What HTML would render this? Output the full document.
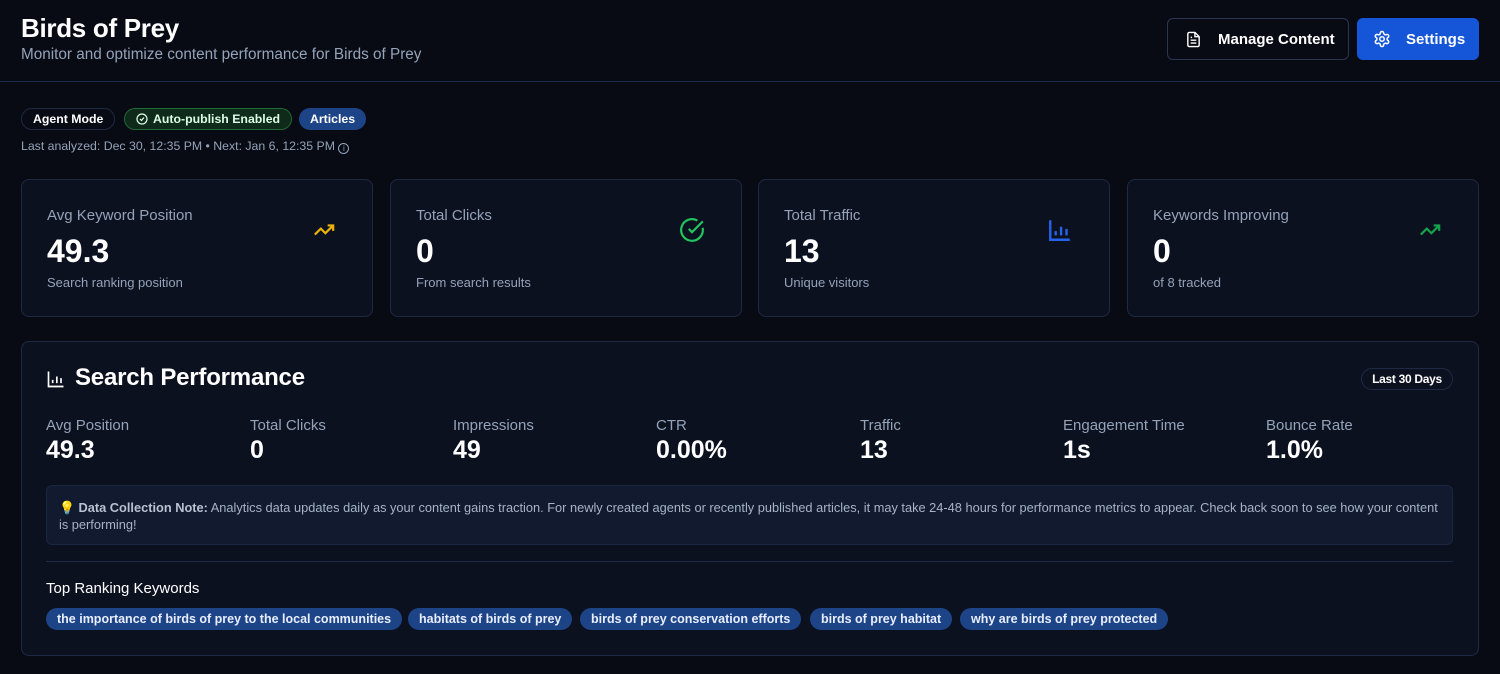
<!DOCTYPE html>
<html><head><meta charset="utf-8"><style>
*{box-sizing:border-box;margin:0;padding:0}
body{width:1500px;height:674px;background:#080b14;font-family:"Liberation Sans",sans-serif;color:#fff;position:relative;overflow:hidden}
.abs{position:absolute}
h1{position:absolute;left:21px;top:13px;font-size:26px;font-weight:700;letter-spacing:-0.3px}
.sub{left:21px;top:46px;font-size:15.3px;color:#94a3b8}
.hr{left:0;top:81px;width:1500px;height:1px;background:#1e2a4a}
.btn{top:18px;height:42px;border-radius:6px;display:flex;align-items:center;font-size:15px;font-weight:700}
.badge{top:108px;height:22px;border-radius:11px;font-size:12.3px;font-weight:700;display:flex;align-items:center;padding:0 11px}
.card{top:179px;width:352px;height:138px;background:#0c1120;border:1px solid #1e2a44;border-radius:8px}
.card .l{position:absolute;left:25px;top:27px;font-size:15px;color:#94a3b8}
.card .v{position:absolute;left:25px;top:53px;font-size:32px;font-weight:700}
.card .s{position:absolute;left:25px;top:95px;font-size:13px;color:#94a3b8}
.card svg{position:absolute;left:288px;top:38px}
.panel{left:21px;top:341px;width:1458px;height:315px;background:#0c1120;border:1px solid #1e2a44;border-radius:8px}
.m{top:417px;font-size:15px;color:#94a3b8}
.m b{display:block;color:#fff;font-size:25px;font-weight:700;margin-top:2px}
.chip{top:608px;height:22px;border-radius:11px;background:#1e4488;font-size:12.5px;font-weight:700;display:flex;align-items:center;padding:0 11px;color:#e8eefc}
</style></head><body>
<h1>Birds of Prey</h1>
<div class="abs sub">Monitor and optimize content performance for Birds of Prey</div>
<div class="abs btn" style="left:1167px;width:182px;border:1px solid #2a3550;background:#080b14">
<svg style="margin-left:17px" width="17" height="17" viewBox="0 0 24 24" fill="none" stroke="#fff" stroke-width="2"><path d="M14 2H6a2 2 0 0 0-2 2v16a2 2 0 0 0 2 2h12a2 2 0 0 0 2-2V8z"/><path d="M14 2v6h6M8 13h8M8 17h8M8 9h2"/></svg>
<span style="margin-left:16px">Manage Content</span></div>
<div class="abs btn" style="left:1357px;width:122px;background:#1556d8">
<svg style="margin-left:16px" width="18" height="18" viewBox="0 0 24 24" fill="none" stroke="#fff" stroke-width="2"><circle cx="12" cy="12" r="3"/><path d="M12.2 2h-.4a2 2 0 0 0-2 2v.2a2 2 0 0 1-1 1.7l-.4.3a2 2 0 0 1-2 0l-.2-.1a2 2 0 0 0-2.7.7l-.2.4a2 2 0 0 0 .7 2.7l.2.1a2 2 0 0 1 1 1.7v.5a2 2 0 0 1-1 1.8l-.2.1a2 2 0 0 0-.7 2.7l.2.4a2 2 0 0 0 2.7.7l.2-.1a2 2 0 0 1 2 0l.4.3a2 2 0 0 1 1 1.7v.2a2 2 0 0 0 2 2h.4a2 2 0 0 0 2-2v-.2a2 2 0 0 1 1-1.7l.4-.3a2 2 0 0 1 2 0l.2.1a2 2 0 0 0 2.7-.7l.2-.4a2 2 0 0 0-.7-2.7l-.2-.1a2 2 0 0 1-1-1.8v-.5a2 2 0 0 1 1-1.7l.2-.1a2 2 0 0 0 .7-2.7l-.2-.4a2 2 0 0 0-2.7-.7l-.2.1a2 2 0 0 1-2 0l-.4-.3a2 2 0 0 1-1-1.7V4a2 2 0 0 0-2-2z"/></svg>
<span style="margin-left:15px">Settings</span></div>
<div class="abs hr"></div>
<div class="abs badge" style="left:21px;border:1px solid #1e2a44">Agent Mode</div>
<div class="abs badge" style="left:124px;border:1px solid #1f6b35;background:#0f2a1a;color:#dcfce7"><svg width="12" height="12" viewBox="0 0 24 24" fill="none" stroke="#dcfce7" stroke-width="2.5" style="margin-right:5px"><circle cx="12" cy="12" r="10"/><path d="M8 12l3 3 5-6"/></svg>Auto-publish Enabled</div>
<div class="abs badge" style="left:299px;background:#1e4488">Articles</div>
<div class="abs" style="left:21px;top:139px;font-size:12.3px;color:#94a3b8">Last analyzed: Dec 30, 12:35 PM • Next: Jan 6, 12:35 PM <span style="display:inline-block;width:11px;height:11px;border:1px solid #94a3b8;border-radius:50%;font-size:8px;text-align:center;line-height:10px;vertical-align:-1px">i</span></div>

<div class="abs card" style="left:21px"><div class="l">Avg Keyword Position</div><div class="v">49.3</div><div class="s">Search ranking position</div>
<svg width="28" height="22" viewBox="0 0 24 24" fill="none" stroke="#eab308" stroke-width="2.4" style="top:39px"><path d="M22 7l-8.5 8.5-5-5L2 17M16 7h6v6"/></svg></div>
<div class="abs card" style="left:390px"><div class="l">Total Clicks</div><div class="v">0</div><div class="s">From search results</div>
<svg width="26" height="26" viewBox="0 0 24 24" fill="none" stroke="#22c55e" stroke-width="2" style="top:37px"><path d="M21.8 10A10 10 0 1 1 17 3.3"/><path d="M9 11l3 3L22 4"/></svg></div>
<div class="abs card" style="left:758px"><div class="l">Total Traffic</div><div class="v">13</div><div class="s">Unique visitors</div>
<svg width="26" height="26" viewBox="0 0 24 24" fill="none" stroke="#2563eb" stroke-width="2.2" style="top:37px"><path d="M3 3v18h18M8 17v-4M13 17V9M18 17v-6"/></svg></div>
<div class="abs card" style="left:1127px"><div class="l">Keywords Improving</div><div class="v">0</div><div class="s">of 8 tracked</div>
<svg width="28" height="22" viewBox="0 0 24 24" fill="none" stroke="#16a34a" stroke-width="2.4" style="top:39px"><path d="M22 7l-8.5 8.5-5-5L2 17M16 7h6v6"/></svg></div>

<div class="abs panel"></div>
<svg class="abs" style="left:46px;top:369px" width="20" height="20" viewBox="0 0 24 24" fill="none" stroke="#fff" stroke-width="2"><path d="M3 3v18h18M8 17v-4M13 17V9M18 17v-6"/></svg>
<div class="abs" style="left:75px;top:364px;font-size:24px;font-weight:700;letter-spacing:-0.2px">Search Performance</div>
<div class="abs" style="left:1361px;top:368px;height:22px;width:92px;border:1px solid #1e2a44;border-radius:11px;font-size:12px;font-weight:700;display:flex;align-items:center;justify-content:center;letter-spacing:-0.3px">Last 30 Days</div>
<div class="abs m" style="left:46px">Avg Position<b>49.3</b></div>
<div class="abs m" style="left:250px">Total Clicks<b>0</b></div>
<div class="abs m" style="left:453px">Impressions<b>49</b></div>
<div class="abs m" style="left:656px">CTR<b>0.00%</b></div>
<div class="abs m" style="left:860px">Traffic<b>13</b></div>
<div class="abs m" style="left:1063px">Engagement Time<b>1s</b></div>
<div class="abs m" style="left:1266px">Bounce Rate<b>1.0%</b></div>
<div class="abs" style="left:46px;top:485px;width:1407px;height:60px;background:#111a2e;border:1px solid #1a2540;border-radius:6px;padding:13px 12px;font-size:12.8px;line-height:17px;color:#a8b3c6"><span style="color:#facc15">💡</span> <b style="color:#b8c2d4">Data Collection Note:</b> Analytics data updates daily as your content gains traction. For newly created agents or recently published articles, it may take 24-48 hours for performance metrics to appear. Check back soon to see how your content is performing!</div>
<div class="abs" style="left:46px;top:561px;width:1407px;height:1px;background:#1e2a44"></div>
<div class="abs" style="left:46px;top:580px;font-size:15px">Top Ranking Keywords</div>
<div class="abs chip" style="left:46px">the importance of birds of prey to the local communities</div>
<div class="abs chip" style="left:408px">habitats of birds of prey</div>
<div class="abs chip" style="left:580px">birds of prey conservation efforts</div>
<div class="abs chip" style="left:810px">birds of prey habitat</div>
<div class="abs chip" style="left:960px">why are birds of prey protected</div>
</body></html>
